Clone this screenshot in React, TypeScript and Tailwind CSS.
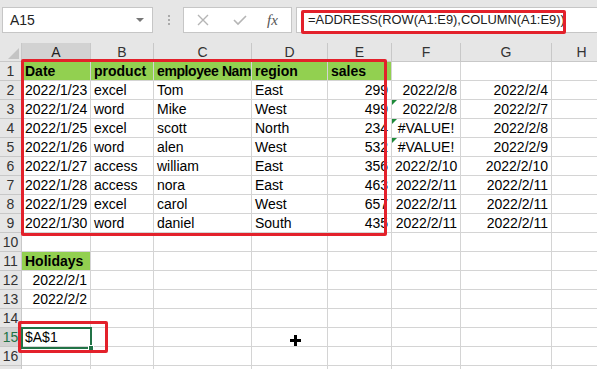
import React from "react";

const colW = ["w-[22px]", "w-[69px]", "w-[63px]", "w-[98px]", "w-[76px]", "w-[64px]", "w-[69px]", "w-[91px]", "w-[60px]"];
const letters = ["A", "B", "C", "D", "E", "F", "G", "H"];

type Cell = { v?: string; align?: "l" | "r" | "c"; bold?: boolean; green?: boolean; tri?: boolean; tight?: boolean };

const dataRows: string[][] = [
  ["2022/1/23", "excel", "Tom", "East", "299", "2022/2/8", "2022/2/4"],
  ["2022/1/24", "word", "Mike", "West", "499", "2022/2/8", "2022/2/7"],
  ["2022/1/25", "excel", "scott", "North", "234", "#VALUE!", "2022/2/8"],
  ["2022/1/26", "word", "alen", "West", "532", "#VALUE!", "2022/2/9"],
  ["2022/1/27", "access", "william", "East", "356", "2022/2/10", "2022/2/10"],
  ["2022/1/28", "access", "nora", "East", "463", "2022/2/11", "2022/2/11"],
  ["2022/1/29", "excel", "carol", "West", "657", "2022/2/11", "2022/2/11"],
  ["2022/1/30", "word", "daniel", "South", "435", "2022/2/11", "2022/2/11"],
];

function buildRows(): Cell[][] {
  const rows: Cell[][] = [];
  // header text in C1 is clipped by D1 in the sheet, so only the visible part is shown
  rows.push(
    ["Date", "product", "employee Nam", "region", "sales"].map((v, j) => ({ v, bold: true, green: true, tight: j === 2 }))
  );
  dataRows.forEach((r, i) => {
    rows.push(
      r.map((v, j) => {
        if (j === 0 || j === 4 || j === 6) return { v, align: "r" };
        if (j === 5) return { v, align: v.startsWith("#") ? "c" : "r", tri: i >= 1 && i <= 3 };
        return { v };
      })
    );
  });
  rows.push([]);
  rows.push([{ v: "Holidays", bold: true, green: true }]);
  rows.push([{ v: "2022/2/1", align: "r" }]);
  rows.push([{ v: "2022/2/2", align: "r" }]);
  rows.push([]);
  rows.push([{ v: "$A$1" }]);
  rows.push([]);
  rows.push([]);
  return rows;
}

function GridRow({ n, cells }: { n: number; cells: Cell[] }) {
  const sel = n === 15;
  return (
    <div className="flex h-[19px] shrink-0">
      <div
        className={`${colW[0]} shrink-0 border-b border-r text-center text-[14px] leading-[18px] ${
          sel ? "bg-[#d2d2d2] text-[#217346] border-r-[#217346] border-b-[#c8c8c8]" : "bg-[#e6e6e6] text-[#333] border-[#c8c8c8]"
        }`}
      >
        {n}
      </div>
      {letters.map((_, j) => {
        const c = cells[j] || {};
        return (
          <div
            key={j}
            className={`${colW[j + 1]} relative shrink-0 overflow-hidden whitespace-nowrap border-b border-r border-[#d4d4d4] px-[3px] text-[14px] leading-[18px] text-black ${
              c.green ? "bg-[#92d050]" : "bg-white"
            } ${c.bold ? "font-bold" : ""} ${c.tight ? "tracking-[-0.4px]" : ""} ${
              c.align === "r" ? "text-right" : c.align === "c" ? "text-center" : "text-left"
            }`}
          >
            {c.tri && (
              <span className="absolute left-0 top-0 h-0 w-0 border-r-[5px] border-t-[5px] border-r-transparent border-t-[#1e8a3a]" />
            )}
            {c.v}
          </div>
        );
      })}
    </div>
  );
}

export default function App() {
  const rows = buildRows();
  return (
    <div className="relative h-[369px] w-[597px] overflow-hidden bg-white" style={{ fontFamily: '"Liberation Sans", Arial, sans-serif' }}>
      {/* formula bar */}
      <div className="flex h-[43px] items-start gap-0 bg-[#e6e6e6] pt-[7px]">
        <div className="ml-[2px] flex h-[26px] w-[151px] items-center justify-between border border-[#c6c6c6] bg-white pl-[7px] pr-[8px] text-[14px] text-[#222]">
          <span>A15</span>
          <span className="h-0 w-0 border-x-[4px] border-t-[4px] border-x-transparent border-t-[#777]" />
        </div>
        <div className="ml-[15px] mr-[13px] flex h-[26px] flex-col justify-center gap-[2px]">
          <span className="h-[2px] w-[2px] bg-[#aaa]" />
          <span className="h-[2px] w-[2px] bg-[#aaa]" />
          <span className="h-[2px] w-[2px] bg-[#aaa]" />
        </div>
        <div className="flex h-[26px] w-[109px] items-center border border-[#c6c6c6] bg-white">
          <svg width="12" height="12" viewBox="0 0 12 12" className="ml-[13px]">
            <path d="M1 1 L11 11 M11 1 L1 11" stroke="#b5b5b5" strokeWidth="1.4" />
          </svg>
          <svg width="14" height="12" viewBox="0 0 14 12" className="ml-[24px]">
            <path d="M1 6 L5 10 L13 2" stroke="#b5b5b5" strokeWidth="1.6" fill="none" />
          </svg>
          <span className="ml-[20px] text-[15px] italic text-[#555]" style={{ fontFamily: '"Liberation Serif", serif' }}>
            fx
          </span>
        </div>
        <div className="ml-[4px] flex h-[26px] flex-1 items-center border border-r-0 border-[#c6c6c6] bg-white pl-[11px] text-[12.9px] text-[#222]">
          =ADDRESS(ROW(A1:E9),COLUMN(A1:E9))
        </div>
      </div>

      {/* column headers */}
      <div className="flex h-[19px]">
        <div className="relative w-[22px] shrink-0 border-b border-r border-[#c8c8c8] bg-[#e6e6e6]">
          <span className="absolute bottom-[2px] right-[2px] h-0 w-0 border-b-[11px] border-l-[11px] border-b-[#c4c4c4] border-l-transparent" />
        </div>
        {letters.map((l, j) => (
          <div
            key={l}
            className={`${colW[j + 1]} shrink-0 border-r text-center text-[14px] leading-[18px] ${
              j === 0 ? "border-b-2 border-b-[#217346] border-r-[#c8c8c8] bg-[#d2d2d2] text-[#222]" : "border-b border-[#c8c8c8] bg-[#e6e6e6] text-[#333]"
            }`}
          >
            {l}
          </div>
        ))}
      </div>

      {rows.map((cells, i) => (
        <GridRow key={i} n={i + 1} cells={cells} />
      ))}

      {/* selection A15 */}
      <div className="absolute left-[21px] top-[327px] h-[22px] w-[71px] border-2 border-[#217346]" />
      <div className="absolute left-[88px] top-[345px] h-[6px] w-[6px] border border-white bg-[#217346]" />

      {/* red highlight boxes */}
      <div className="absolute left-[301px] top-[10px] h-[24px] w-[265px] rounded-[2px] border-[3px] border-[#e3212b]" />
      <div className="absolute left-[21px] top-[59px] h-[177px] w-[366px] rounded-[2px] border-[3px] border-[#e3212b]" />
      <div className="absolute left-[18px] top-[321px] h-[32px] w-[90px] rounded-[2px] border-[3px] border-[#e3212b]" />

      {/* cursor */}
      <svg className="absolute left-[290px] top-[335px]" width="11" height="11" viewBox="0 0 11 11">
        <path d="M4 0h3v4h4v3H7v4H4V7H0V4h4z" fill="#000" />
      </svg>
    </div>
  );
}
